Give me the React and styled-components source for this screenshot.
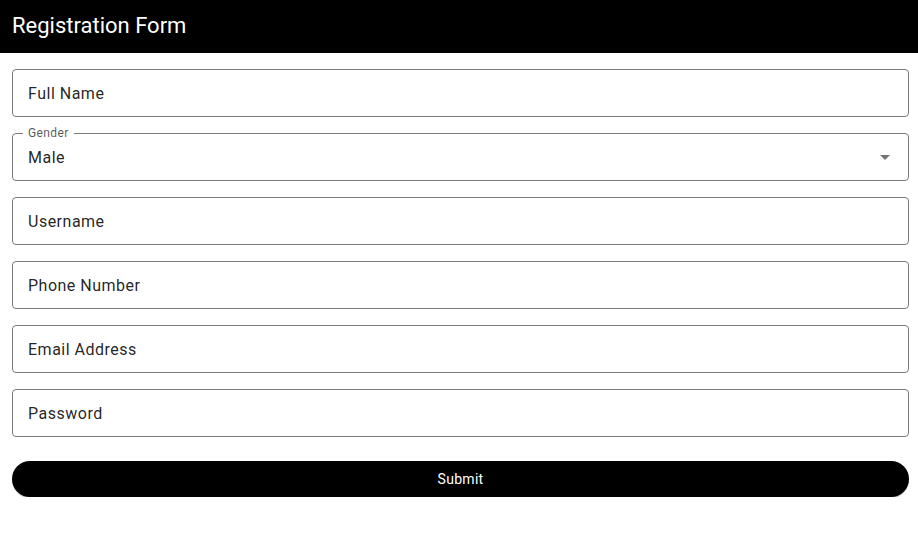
import React from "react";
import styled, { createGlobalStyle } from "styled-components";

const Global = createGlobalStyle`
  html, body { margin: 0; padding: 0; background: #fff; }
  body { font-family: Roboto, "Noto Sans", Arial, sans-serif; }
  * { box-sizing: border-box; }
`;

const Header = styled.header`
  height: 53px;
  background: #000;
  color: #fff;
  display: flex;
  align-items: center;
  padding: 0 12px;
`;

const Title = styled.h1`
  margin: 0;
  font-size: 22px;
  font-weight: 400;
  letter-spacing: 0;
  line-height: 1;
  margin-top: -2px;
`;

const Form = styled.form`
  display: flex;
  flex-direction: column;
  gap: 16px;
  padding: 16px 9px 0 12px;
`;

const Field = styled.div`
  position: relative;
  height: 48px;
  display: flex;
  align-items: center;
  padding: 0 16px;
`;

const Outline = styled.fieldset`
  position: absolute;
  inset: -5px 0 0 0;
  margin: 0;
  padding: 0 10px;
  border: 1px solid #7b7b7b;
  border-radius: 4px;
  pointer-events: none;
`;

const Legend = styled.legend`
  display: block;
  height: 11px;
  padding: 0 5px;
  font-size: 12px;
  line-height: 11px;
  color: rgba(0, 0, 0, 0.68);
  letter-spacing: 0.4px;
  ${(p) => (p.$hidden ? "width: 0; padding: 0; visibility: hidden;" : "")}
`;

const Value = styled.span`
  flex: 1;
  font-size: 16px;
  color: rgba(0, 0, 0, 0.87);
  letter-spacing: 0.5px;
`;

const Arrow = styled.svg`
  width: 24px;
  height: 24px;
  margin-right: -4px;
  fill: rgba(0, 0, 0, 0.54);
`;

const SubmitButton = styled.button`
  margin-top: 8px;
  height: 36px;
  border: none;
  border-radius: 18px;
  background: #000;
  color: #fff;
  font-family: Roboto, "Noto Sans", Arial, sans-serif;
  font-size: 14px;
  font-weight: 400;
  letter-spacing: 0.3px;
  box-shadow: 0 2px 1px -1px rgba(0,0,0,0.2), 0 1px 1px 0 rgba(0,0,0,0.14);
  cursor: pointer;
`;

function TextField({ label }) {
  return (
    <Field>
      <Outline>
        <Legend $hidden>{"\u200b"}</Legend>
      </Outline>
      <Value>{label}</Value>
    </Field>
  );
}

export default function App() {
  return (
    <>
      <Global />
      <Header>
        <Title>Registration Form</Title>
      </Header>
      <Form onSubmit={(e) => e.preventDefault()}>
        <TextField label="Full Name" />
        <Field>
          <Outline>
            <Legend>Gender</Legend>
          </Outline>
          <Value>Male</Value>
          <Arrow viewBox="0 0 24 24">
            <path d="M7 10l5 5 5-5z" />
          </Arrow>
        </Field>
        <TextField label="Username" />
        <TextField label="Phone Number" />
        <TextField label="Email Address" />
        <TextField label="Password" />
        <SubmitButton type="submit">Submit</SubmitButton>
      </Form>
    </>
  );
}
